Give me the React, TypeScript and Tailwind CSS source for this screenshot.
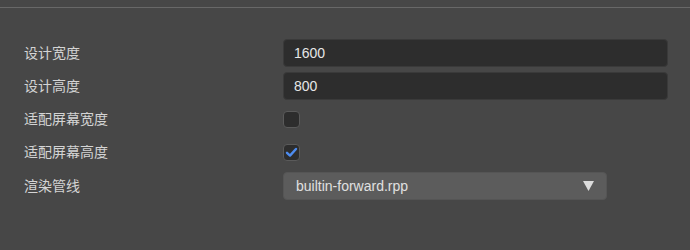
import { useState } from "react";

/* ---------- Field rows ---------- */
function Row({ label, children }: { label: string; children: React.ReactNode }) {
  return (
    <div className="flex items-center h-[28px]">
      <div className="w-[259px] shrink-0 text-[14px] text-[#d4d4d4]">{label}</div>
      <div className="flex-1 flex items-center">{children}</div>
    </div>
  );
}

function TextInput({ value }: { value: string }) {
  return (
    <div className="w-full h-[28px] flex items-center px-[10px] rounded-[4px] bg-[#2d2d2d] border border-[#3a3a3a] text-[14px] text-[#e6e6e6]">
      {value}
    </div>
  );
}

function Checkbox({ checked }: { checked: boolean }) {
  return (
    <div className="w-[17px] h-[17px] rounded-[4px] bg-[#2d2d2d] border border-[#5a5a5a] flex items-center justify-center">
      {checked && (
        <svg width="13" height="13" viewBox="0 0 13 13">
          <path d="M2 6.8 L5 9.6 L11 3" fill="none" stroke="#4d8cf0" strokeWidth="2.4" strokeLinecap="round" strokeLinejoin="round" />
        </svg>
      )}
    </div>
  );
}

function Select({ value }: { value: string }) {
  return (
    <div className="w-[324px] h-[28px] flex items-center justify-between pl-[12px] pr-[12px] rounded-[4px] bg-[#5c5c5c] border border-[#555555] text-[14px] text-[#e0e0e0]">
      <span>{value}</span>
      <svg width="11" height="10" viewBox="0 0 11 10">
        <path d="M0 0 H11 L5.5 10 Z" fill="#dcdcdc" />
      </svg>
    </div>
  );
}

/* ---------- Main ---------- */
export default function App() {
  const [fitW] = useState(false);
  const [fitH] = useState(true);

  return (
    <div
      className="w-[690px] h-[250px] bg-[#474747] overflow-hidden"
      style={{ fontFamily: '"Liberation Sans", Arial, "Noto Sans CJK SC", sans-serif' }}
    >
      <div className="h-[7px]" />
      <div className="h-[1px] bg-[#686868]" />
      <div className="pl-[24px] pr-[22px] pt-[31px] flex flex-col gap-[5.25px]">
        <Row label="设计宽度">
          <TextInput value="1600" />
        </Row>
        <Row label="设计高度">
          <TextInput value="800" />
        </Row>
        <Row label="适配屏幕宽度">
          <Checkbox checked={fitW} />
        </Row>
        <Row label="适配屏幕高度">
          <Checkbox checked={fitH} />
        </Row>
        <Row label="渲染管线">
          <Select value="builtin-forward.rpp" />
        </Row>
      </div>
    </div>
  );
}
